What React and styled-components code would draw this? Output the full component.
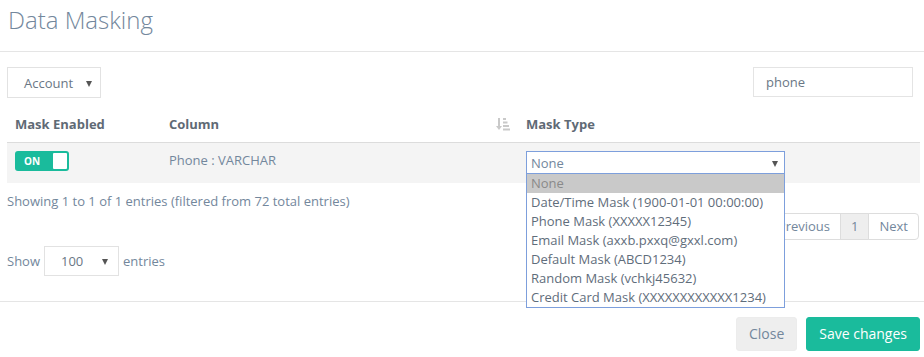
import React, { useState } from 'react';
import styled, { createGlobalStyle } from 'styled-components';

const GlobalStyle = createGlobalStyle`
  body {
    margin: 0;
    background: #fff;
    font-family: "Open Sans", "Liberation Sans", sans-serif;
    font-size: 13px;
    color: #73879C;
  }
  * { box-sizing: border-box; }
`;

const Modal = styled.div`
  width: 924px;
  background: #fff;
`;

const Header = styled.div`
  height: 52px;
  padding: 6px 8px 0;
  border-bottom: 1px solid #e5e5e5;
`;

const Title = styled.h4`
  margin: 0;
  font-size: 24px;
  font-weight: 300;
  line-height: 28px;
  color: #73879C;
`;

const Body = styled.div`
  padding: 15px 4px 25px 7px;
`;

const Toolbar = styled.div`
  display: flex;
  justify-content: space-between;
  align-items: flex-start;
  height: 30px;
`;

const SelectBox = styled.div`
  position: relative;
  display: flex;
  align-items: center;
  width: ${(p) => p.$width}px;
  height: ${(p) => p.$height}px;
  padding-left: ${(p) => p.$pad}px;
  border: 1px solid ${(p) => (p.$focused ? '#7d9fdc' : '#e2e2e2')};
  background: #fff;
  color: ${(p) => (p.$dark ? '#6a7785' : '#73879C')};
  line-height: 18px;
`;

const Caret = styled.span`
  position: absolute;
  right: ${(p) => p.$right}px;
  top: 50%;
  margin-top: -2px;
  width: 0;
  height: 0;
  border-left: 3.5px solid transparent;
  border-right: 3.5px solid transparent;
  border-top: 6px solid #555;
`;

const Search = styled.div`
  width: 160px;
  height: 30px;
  margin-right: 7px;
  padding-left: 12px;
  display: flex;
  align-items: center;
  border: 1px solid #e4e4e4;
  color: #6a7785;
`;

const Table = styled.table`
  width: 913px;
  border-collapse: collapse;
  table-layout: fixed;
`;

const Th = styled.th`
  width: ${(p) => p.$width}px;
  padding: 18px 8px 9px;
  text-align: left;
  font-weight: 700;
  line-height: 18px;
  color: #5f6a75;
  border-bottom: 1px solid #dcdcdc;
`;

const ThInner = styled.div`
  display: flex;
  justify-content: space-between;
  align-items: center;
`;

const Tr = styled.tr`
  background: ${(p) => (p.$striped ? '#f4f4f4' : 'transparent')};
`;

const Td = styled.td`
  height: 40px;
  padding: 8px;
  vertical-align: top;
  line-height: 18px;
  color: #73879C;
`;

const Toggle = styled.div`
  display: flex;
  align-items: center;
  justify-content: space-between;
  width: 54px;
  height: 20px;
  padding: 2px 2px 2px 9px;
  border-radius: 3px;
  background: #1ABB9C;
  color: #fff;
  font-size: 10px;
  font-weight: 700;
`;

const Knob = styled.span`
  width: 14px;
  height: 16px;
  background: #fff;
  border-radius: 1px;
`;

const MaskCell = styled.div`
  position: relative;
  width: 259px;
`;

const Menu = styled.ul`
  position: absolute;
  left: 0;
  top: 22px;
  width: 259px;
  margin: 0;
  padding: 0;
  list-style: none;
  background: #fff;
  border: 1px solid #7d9fdc;
  z-index: 10;
`;

const Option = styled.li`
  height: 19px;
  padding-left: 4px;
  line-height: 19px;
  white-space: nowrap;
  background: ${(p) => (p.$active ? '#c9c9c9' : '#fff')};
  color: ${(p) => (p.$active ? '#8a8a8a' : '#5f6d7b')};
`;

const InfoRow = styled.div`
  display: flex;
  justify-content: space-between;
  align-items: flex-start;
`;

const Info = styled.div`
  padding-top: 9px;
  line-height: 18px;
`;

const Pagination = styled.div`
  display: flex;
  margin-top: 30px;
  margin-right: 1px;
`;

const PageBtn = styled.div`
  height: 27px;
  padding: 0 10px;
  display: flex;
  align-items: center;
  border: 1px solid #dddddd;
  margin-left: -1px;
  background: ${(p) => (p.$current ? '#eeeeee' : '#fff')};
  color: #73879C;
  &:first-child { border-radius: 4px 0 0 4px; }
  &:last-child { border-radius: 0 4px 4px 0; }
`;

const LengthRow = styled.div`
  display: flex;
  align-items: center;
  gap: 4px;
  margin-top: 6px;
`;

const Footer = styled.div`
  display: flex;
  justify-content: flex-end;
  gap: 9px;
  padding: 15px 4px 0;
  border-top: 1px solid #e5e5e5;
`;

const Button = styled.button`
  height: 34px;
  padding: 0 12px;
  border: 1px solid ${(p) => (p.$primary ? '#1ABB9C' : '#ececec')};
  border-radius: 3px;
  background: ${(p) => (p.$primary ? '#1ABB9C' : '#eeeeee')};
  color: ${(p) => (p.$primary ? '#fff' : '#73879C')};
  font-family: inherit;
  font-size: 14px;
`;

const SortIcon = () => (
  <svg width="14" height="13" viewBox="0 0 14 13" fill="#c9c9c9">
    <rect x="2" y="0" width="2" height="9" />
    <polygon points="0,8 6,8 3,12" />
    <rect x="7" y="0" width="3" height="2" />
    <rect x="7" y="3.5" width="4.5" height="2" />
    <rect x="7" y="7" width="6" height="2" />
    <rect x="7" y="10.5" width="7" height="2" />
  </svg>
);

const options = [
  'None',
  'Date/Time Mask (1900-01-01 00:00:00)',
  'Phone Mask (XXXXX12345)',
  'Email Mask (axxb.pxxq@gxxl.com)',
  'Default Mask (ABCD1234)',
  'Random Mask (vchkj45632)',
  'Credit Card Mask (XXXXXXXXXXXX1234)',
];

export default function App() {
  const [selected] = useState('None');

  return (
    <Modal>
      <GlobalStyle />
      <Header>
        <Title>Data Masking</Title>
      </Header>
      <Body>
        <Toolbar>
          <SelectBox $width={94} $height={31} $pad={16} $dark>
            Account
            <Caret $right={8} />
          </SelectBox>
          <Search>phone</Search>
        </Toolbar>

        <Table>
          <thead>
            <tr>
              <Th $width={154}>Mask Enabled</Th>
              <Th $width={357}>
                <ThInner>
                  Column
                  <SortIcon />
                </ThInner>
              </Th>
              <Th $width={402}>Mask Type</Th>
            </tr>
          </thead>
          <tbody>
            <Tr $striped>
              <Td>
                <Toggle>
                  ON
                  <Knob />
                </Toggle>
              </Td>
              <Td>Phone : VARCHAR</Td>
              <Td>
                <MaskCell>
                  <SelectBox $width={259} $height={23} $pad={4} $focused>
                    {selected}
                    <Caret $right={6} />
                  </SelectBox>
                  <Menu>
                    {options.map((o) => (
                      <Option key={o} $active={o === selected}>{o}</Option>
                    ))}
                  </Menu>
                </MaskCell>
              </Td>
            </Tr>
          </tbody>
        </Table>

        <InfoRow>
          <Info>Showing 1 to 1 of 1 entries (filtered from 72 total entries)</Info>
          <Pagination>
            <PageBtn>Previous</PageBtn>
            <PageBtn $current>1</PageBtn>
            <PageBtn>Next</PageBtn>
          </Pagination>
        </InfoRow>

        <LengthRow>
          Show
          <SelectBox $width={75} $height={30} $pad={16} $dark>
            100
            <Caret $right={10} />
          </SelectBox>
          entries
        </LengthRow>
      </Body>
      <Footer>
        <Button>Close</Button>
        <Button $primary>Save changes</Button>
      </Footer>
    </Modal>
  );
}
